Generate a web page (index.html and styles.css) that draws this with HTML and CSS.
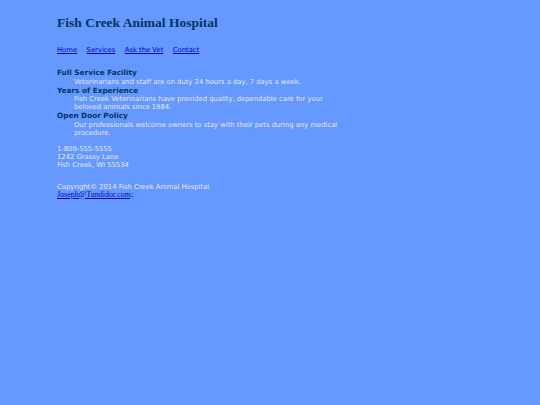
FILE: index.html
```html
<!DOCTYPE html>
<html>
<head>
<meta charset="utf-8">
<title>Fish Creek Animal Hospital</title>
<link rel="stylesheet" href="styles.css">
</head>
<body>
<div class="wrapper">
  <h1 class="title">Fish Creek Animal Hospital</h1>
  <nav class="nav">
    <a href="#">Home</a>
    <a href="#">Services</a>
    <a href="#">Ask the Vet</a>
    <a href="#">Contact</a>
  </nav>
  <dl class="features">
    <dt>Full Service Facility</dt>
    <dd>Veterinarians and staff are on duty 24 hours a day, 7 days a week.</dd>
    <dt>Years of Experience</dt>
    <dd>Fish Creek Veterinarians have provided quality, dependable care for your beloved animals since 1984.</dd>
    <dt>Open Door Policy</dt>
    <dd>Our professionals welcome owners to stay with their pets during any medical procedure.</dd>
  </dl>
  <div class="contact">
    1-800-555-5555<br>
    1242 Grassy Lane<br>
    Fish Creek, WI 55534
  </div>
  <footer class="footer">
    Copyright© 2014 Fish Creek Animal Hospital<br>
    <a class="email" href="#">Joseph@Tundidor.com;</a>
  </footer>
</div>
</body>
</html>
```

FILE: styles.css
```css
html, body {
  margin: 0;
  padding: 0;
}
body {
  background: #6699ff;
  color: #e6e6fa;
  font-family: "DejaVu Sans", Verdana, sans-serif;
  font-size: 6.8px;
  line-height: 8px;
}
.wrapper {
  width: 285px;
  padding: 0 0 0 57px;
}
.title {
  margin: 0;
  padding-top: 15px;
  font-family: "Liberation Serif", serif;
  font-size: 13.5px;
  line-height: 16px;
  color: #003366;
  font-weight: bold;
}
.nav {
  margin-top: 15px;
  display: flex;
  gap: 9.5px;
}
.nav a {
  color: #0000cc;
}
.features {
  margin: 14px 0 0 0;
}
.features dt {
  color: #003366;
  font-weight: bold;
  font-size: 7.3px;
  line-height: 9.5px;
}
.features dd {
  margin: 0 0 0 17px;
}
.contact {
  margin-top: 8px;
}
.footer {
  margin-top: 14px;
}
.email {
  color: #0000cc;
  font-family: "Liberation Serif", serif;
  font-size: 8px;
}
```
